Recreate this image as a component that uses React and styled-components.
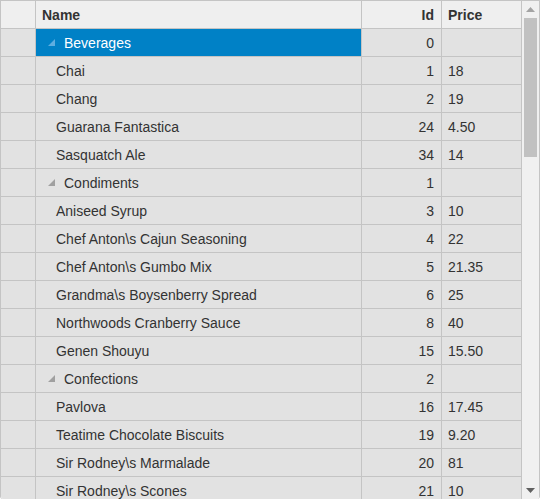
import React from "react";
import styled, { createGlobalStyle } from "styled-components";

const data = [
  { name: "Beverages", id: 0, group: true, selected: true },
  { name: "Chai", id: 1, price: "18" },
  { name: "Chang", id: 2, price: "19" },
  { name: "Guarana Fantastica", id: 24, price: "4.50" },
  { name: "Sasquatch Ale", id: 34, price: "14" },
  { name: "Condiments", id: 1, group: true },
  { name: "Aniseed Syrup", id: 3, price: "10" },
  { name: "Chef Anton\\s Cajun Seasoning", id: 4, price: "22" },
  { name: "Chef Anton\\s Gumbo Mix", id: 5, price: "21.35" },
  { name: "Grandma\\s Boysenberry Spread", id: 6, price: "25" },
  { name: "Northwoods Cranberry Sauce", id: 8, price: "40" },
  { name: "Genen Shouyu", id: 15, price: "15.50" },
  { name: "Confections", id: 2, group: true },
  { name: "Pavlova", id: 16, price: "17.45" },
  { name: "Teatime Chocolate Biscuits", id: 19, price: "9.20" },
  { name: "Sir Rodney\\s Marmalade", id: 20, price: "81" },
  { name: "Sir Rodney\\s Scones", id: 21, price: "10" },
];

const GlobalStyle = createGlobalStyle`
  body {
    margin: 0;
    background: #fff;
    font-family: "Liberation Sans", Arial, sans-serif;
  }
`;

export default function App() {
  return (
    <>
      <GlobalStyle />
      <Grid>
        <Main>
          <HeaderRow>
            <HeadCell />
            <HeadCell>Name</HeadCell>
            <HeadCell align="right">Id</HeadCell>
            <HeadCell>Price</HeadCell>
          </HeaderRow>
          <Body>
            {data.map((row, i) => (
              <Row key={i}>
                <Cell />
                <Cell selected={row.selected} pad={row.group ? 12 : 20}>
                  {row.group && (
                    <Toggle viewBox="0 0 7 7">
                      <polygon
                        points="7,0 7,7 0,7"
                        fill={row.selected ? "#5eaee0" : "#a0a0a0"}
                      />
                    </Toggle>
                  )}
                  {row.name}
                </Cell>
                <Cell align="right">{row.id}</Cell>
                <Cell>{row.price}</Cell>
              </Row>
            ))}
          </Body>
        </Main>
        <Scrollbar>
          <Arrow viewBox="0 0 9 5">
            <polygon points="0,5 9,5 4.5,0" fill="#a3a3a3" />
          </Arrow>
          <Track>
            <Thumb />
          </Track>
          <Arrow viewBox="0 0 9 5">
            <polygon points="0,0 9,0 4.5,5" fill="#606060" />
          </Arrow>
        </Scrollbar>
      </Grid>
    </>
  );
}

const Grid = styled.div`
  width: 540px;
  height: 499px;
  box-sizing: border-box;
  border: 1px solid #c4c4c4;
  border-bottom: none;
  border-radius: 0 0 3px 3px;
  display: flex;
  overflow: hidden;
  color: #333;
  font-size: 14px;
`;

const Main = styled.div`
  width: 521px;
  display: flex;
  flex-direction: column;
`;

const HeaderRow = styled.div`
  display: grid;
  grid-template-columns: 35px 326px 80px 80px;
  height: 28px;
  flex-shrink: 0;
`;

const HeadCell = styled.div`
  box-sizing: border-box;
  border-right: 1px solid #c4c4c4;
  border-bottom: 1px solid #c4c4c4;
  background: #efefef;
  font-weight: bold;
  padding: 0 7px 0 6px;
  display: flex;
  align-items: center;
  justify-content: ${(p) => (p.align === "right" ? "flex-end" : "flex-start")};
`;

const Body = styled.div`
  flex: 1;
  overflow: hidden;
`;

const Row = styled.div`
  display: grid;
  grid-template-columns: 35px 326px 80px 80px;
  height: 28px;
`;

const Cell = styled.div`
  box-sizing: border-box;
  border-right: 1px solid #c4c4c4;
  border-bottom: 1px solid #c4c4c4;
  background: ${(p) => (p.selected ? "#0081c6" : "#e2e2e2")};
  color: ${(p) => (p.selected ? "#fff" : "#333")};
  padding: 0 7px 0 ${(p) => (p.pad ? p.pad : 6)}px;
  display: flex;
  align-items: center;
  justify-content: ${(p) => (p.align === "right" ? "flex-end" : "flex-start")};
  white-space: nowrap;
`;

const Toggle = styled.svg`
  width: 7px;
  height: 7px;
  margin: 0 9px 0 0;
  flex-shrink: 0;
`;

const Scrollbar = styled.div`
  width: 17px;
  background: #f0f0f0;
  display: flex;
  flex-direction: column;
  align-items: center;
`;

const Arrow = styled.svg`
  width: 9px;
  height: 5px;
  margin: 6px 0;
  flex-shrink: 0;
`;

const Track = styled.div`
  flex: 1;
  width: 100%;
  padding: 0 2px;
  box-sizing: border-box;
`;

const Thumb = styled.div`
  height: 139px;
  background: #c1c1c1;
`;
